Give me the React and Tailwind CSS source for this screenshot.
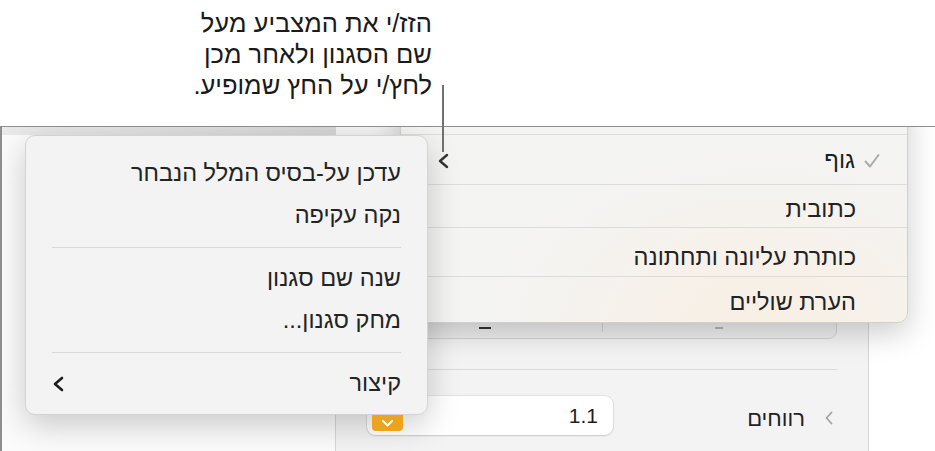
export default function App() {
  return (
    <div className="relative w-[935px] h-[451px] overflow-hidden bg-white font-['Liberation_Sans','DejaVu_Sans',sans-serif] text-[#222]">
      {/* Callout */}
      <div className="h-[126px] flex">
        <div dir="rtl" className="w-[432px] pt-[8px] text-right text-[25.5px] leading-[31px] text-[#1a1a1a]">
          <p>הזז/י את המצביע מעל</p>
          <p>שם הסגנון ולאחר מכן</p>
          <p>לחץ/י על החץ שמופיע.</p>
        </div>
      </div>

      {/* Screenshot frame */}
      <div className="relative h-[325px] flex border-t border-l-2 border-[#8e8e8e] overflow-hidden">
        {/* canvas */}
        <div className="w-[333px] flex flex-col bg-[#fbfbfb]">
          <div className="h-[8px] bg-gradient-to-r from-[#e9e9e9] to-[#d5d5d5]" />
        </div>
        {/* inspector */}
        <div className="w-[534px] flex flex-col border-l border-r border-[#d6d6d6] bg-[#f3f3f3] px-[31px]">
          <div className="mt-[170px] h-[42px] flex rounded-b-[8px] border border-[#d4d4d4] bg-[#eeeeee]">
            <div className="flex-1 flex items-end justify-center pb-[9px]">
              <div className="w-[12px] h-[2px] bg-[#333]" />
            </div>
            <div className="w-px bg-[#d2d2d2] my-[6px]" />
            <div className="flex-1 flex items-end justify-center pb-[9px]">
              <div className="w-[8px] h-[2px] bg-[#b5b5b5]" />
            </div>
          </div>
          <div className="mt-[30px] h-px bg-[#d9d9d9]" />
          <div className="mt-[26px] h-[39px] flex items-center justify-between">
            <div className="relative w-[246px] h-[39px] rounded-[8px] bg-white shadow-[0_0_0_0.5px_rgba(0,0,0,0.13),0_1px_2px_rgba(0,0,0,0.12)] flex items-center justify-end pr-[15px] text-[21px] text-[#1e1e1e]">
              1.1
              <div className="absolute z-20 left-[5px] top-[19px] w-[31px] h-[16px] rounded-b-[4px] bg-[#eba41d] flex items-center justify-center pt-[1px]">
                <svg width="11" height="7" viewBox="0 0 11 7" fill="none">
                  <polyline points="1,1 5.5,5.5 10,1" stroke="white" strokeWidth="2" strokeLinecap="round" strokeLinejoin="round" />
                </svg>
              </div>
            </div>
            <div className="flex items-center gap-[20px] pr-[4px] pt-[5px]">
              <span className="text-[22px] text-[#222]" dir="rtl">רווחים</span>
              <svg width="8" height="14" viewBox="0 0 8 14" fill="none">
                <polyline points="6.5,1.5 1.5,7 6.5,12.5" stroke="#a3a3a3" strokeWidth="1.8" strokeLinecap="round" strokeLinejoin="round" />
              </svg>
            </div>
          </div>
        </div>
        {/* right area */}
        <div className="flex-1 bg-white" />

        {/* Right popup (style list) */}
        <div
          dir="rtl"
          className="absolute left-[398px] top-[-32px] w-[508px] flex flex-col rounded-b-[10px] border border-[#d0d0d0] bg-[radial-gradient(ellipse_at_72%_100%,#f8efe4,#f4f4f3_55%)] shadow-[0_10px_30px_rgba(0,0,0,0.2)] text-[23.5px] text-[#222]"
        >
          <div className="h-[39px] border-b border-[#dcdcdc]" />
          <div className="h-[50px] flex items-center pr-[27px] pl-[36px] gap-[9px] pt-[2px] border-b border-[#dcdcdc]">
            <svg className="shrink-0 w-[16px] h-[16px]" viewBox="0 0 16 16" fill="none">
              <polyline points="1.5,8.5 6,13.5 14.5,2" stroke="#a9a9a9" strokeWidth="1.9" strokeLinecap="round" strokeLinejoin="round" />
            </svg>
            <span className="text-[#1d1d1d]">גוף</span>
            <svg className="ms-auto shrink-0 w-[13px] h-[18px]" viewBox="0 0 13 18" fill="none">
              <polyline points="10,3 3,9 10,15" stroke="#333" strokeWidth="2.4" strokeLinecap="round" strokeLinejoin="round" />
            </svg>
          </div>
          <div className="h-[43px] flex items-center pr-[51px] pt-[7px] border-b border-[#dcdcdc]">
            <span>כתובית</span>
          </div>
          <div className="h-[49px] flex items-center pr-[51px] pt-[11px] border-b border-[#dcdcdc]">
            <span>כותרת עליונה ותחתונה</span>
          </div>
          <div className="h-[45px] flex items-center pr-[51px] pt-[6px]">
            <span>הערת שוליים</span>
          </div>
        </div>

        {/* Left popup (actions) */}
        <div
          dir="rtl"
          className="absolute left-[23px] top-[8px] w-[403px] h-[280px] flex flex-col rounded-[10px] border border-[#d3d3d3] bg-[#f3f3f3] shadow-[0_10px_32px_rgba(0,0,0,0.2)] px-[26px] pt-[17px] text-[23.5px] text-[#232323]"
        >
          <div className="h-[42px] flex items-center">עדכן על-בסיס המלל הנבחר</div>
          <div className="h-[42px] flex items-center">נקה עקיפה</div>
          <div className="my-[10px] h-px bg-[#d9d9d9]" />
          <div className="h-[42px] flex items-center">שנה שם סגנון</div>
          <div className="h-[42px] flex items-center">מחק סגנון...</div>
          <div className="my-[10px] h-px bg-[#d9d9d9]" />
          <div className="h-[42px] flex items-center">
            <span>קיצור</span>
            <svg className="ms-auto shrink-0" width="13" height="16" viewBox="0 0 13 16" fill="none">
              <polyline points="10,2 3,8 10,14" stroke="#1d1d1d" strokeWidth="2.6" strokeLinecap="round" strokeLinejoin="round" />
            </svg>
          </div>
        </div>
      </div>

      {/* Leader line */}
      <div className="absolute left-[442px] top-[85px] w-[1.5px] h-[67px] bg-[#707070]" />
    </div>
  );
}
